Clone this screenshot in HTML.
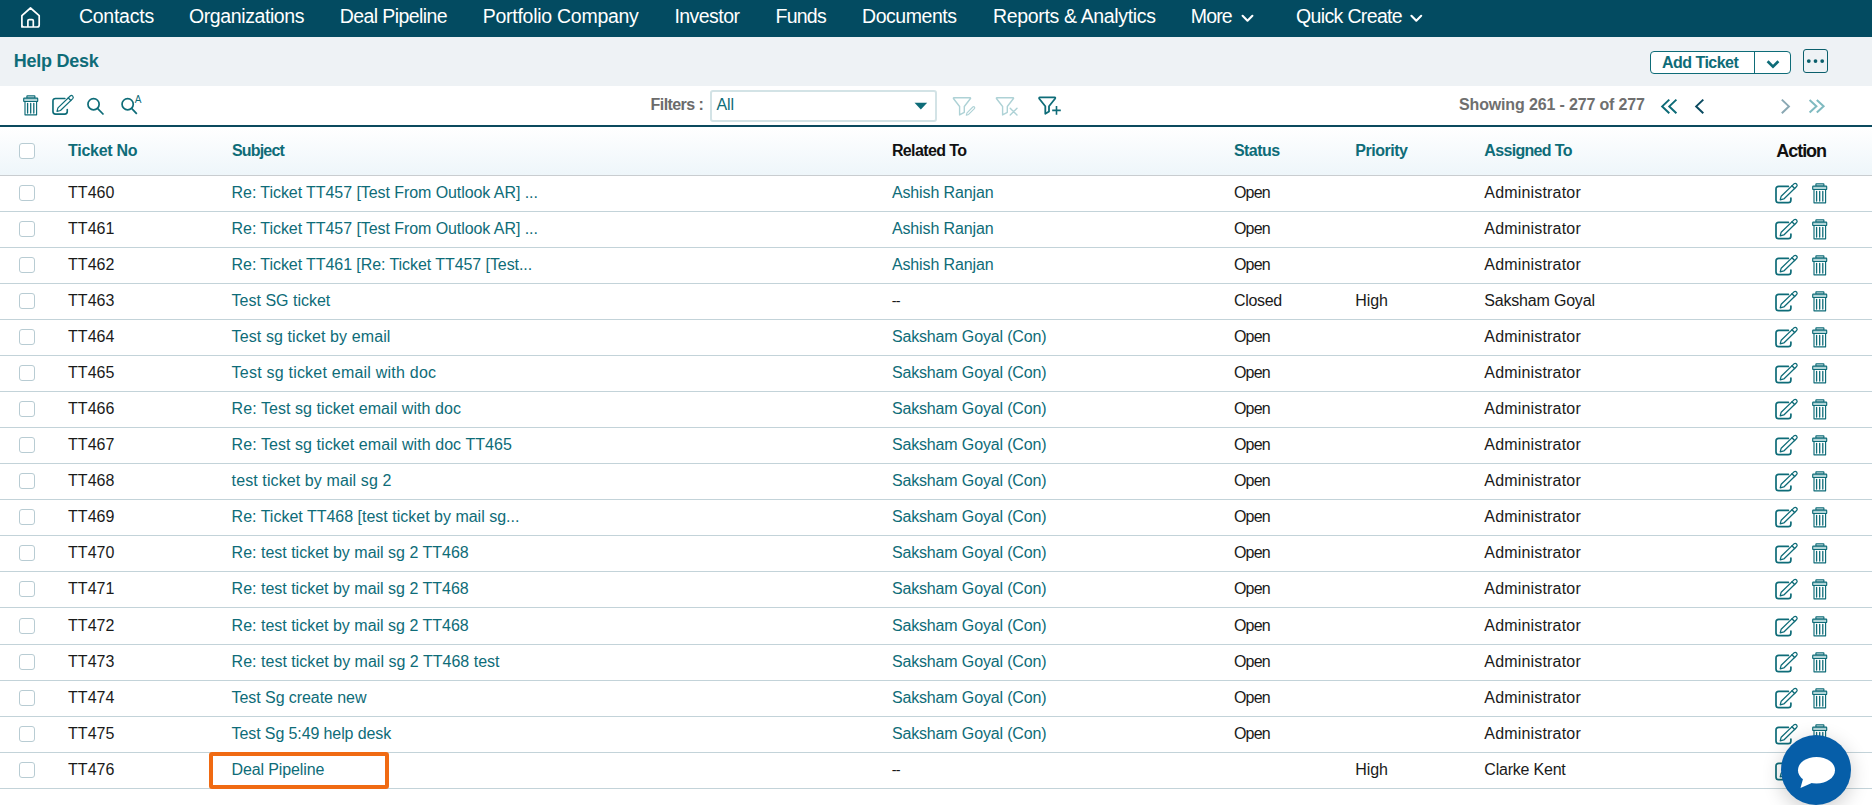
<!DOCTYPE html>
<html><head><meta charset="utf-8"><title>Help Desk</title>
<style>
html,body{margin:0;padding:0;}
body{width:1872px;height:805px;overflow:hidden;position:relative;background:#fff;font-family:"Liberation Sans",sans-serif;}
.t{position:absolute;white-space:nowrap;}
.nav{position:absolute;left:0;top:0;width:1872px;height:37px;background:#034b61;}
.sub{position:absolute;left:0;top:37px;width:1872px;height:49px;background:#eef2f5;}
.dl{position:absolute;left:0;top:125px;width:1872px;height:2px;background:#0b4a5e;}
.hd{position:absolute;left:0;top:127px;width:1872px;height:48px;background:linear-gradient(#ffffff,#eef6fa);}
.hl{position:absolute;left:0;top:175px;width:1872px;height:1px;background:#c9cdd0;}
.rl{position:absolute;left:0;width:1872px;height:1px;background:#c3d3d9;}
.cb{position:absolute;left:19px;width:14px;height:14px;border:1px solid #b8ccd3;border-radius:3px;background:#fff;}
.sel{position:absolute;left:710px;top:90px;width:223px;height:28px;border:2px solid #d3e3e6;border-radius:3px;background:#fff;}
.btn{position:absolute;left:1650px;top:51px;width:139px;height:21px;border:1px solid #0e6c78;border-radius:4px;background:#fff;}
.dots{position:absolute;left:1803px;top:49px;width:23px;height:22px;border:1.3px solid #0b5f6c;border-radius:3px;}
.hi{position:absolute;left:209px;top:752px;width:172px;height:29px;border:4px solid #f06a12;border-radius:3px;}
.chat{position:absolute;left:1781px;top:735px;width:70px;height:70px;border-radius:50%;background:#065ea8;box-shadow:0 5px 20px rgba(0,0,0,0.2);}

.bdv{position:absolute;left:1754px;top:51px;width:1px;height:23px;background:#0e6c78;}
svg.ov{position:absolute;left:0;top:0;}
</style></head><body>
<div class="nav"></div>
<div class="sub"></div>
<div class="dl"></div>
<div class="hd"></div>
<div class="hl"></div>
<div class="sel"></div>
<div class="btn"></div>
<div class="dots"></div>
<div class="cb" style="top:143px"></div>
<div class="bdv"></div>
<div class="t" style="left:78.90px;top:7.29px;font-size:19.5px;line-height:19.5px;color:#ffffff;letter-spacing:-0.243px;">Contacts</div>
<div class="t" style="left:189.00px;top:7.29px;font-size:19.5px;line-height:19.5px;color:#ffffff;letter-spacing:-0.400px;">Organizations</div>
<div class="t" style="left:339.77px;top:7.29px;font-size:19.5px;line-height:19.5px;color:#ffffff;letter-spacing:-0.592px;">Deal Pipeline</div>
<div class="t" style="left:482.77px;top:7.29px;font-size:19.5px;line-height:19.5px;color:#ffffff;letter-spacing:-0.269px;">Portfolio Company</div>
<div class="t" style="left:674.38px;top:7.29px;font-size:19.5px;line-height:19.5px;color:#ffffff;letter-spacing:-0.529px;">Investor</div>
<div class="t" style="left:775.57px;top:7.29px;font-size:19.5px;line-height:19.5px;color:#ffffff;letter-spacing:-0.775px;">Funds</div>
<div class="t" style="left:862.04px;top:7.29px;font-size:19.5px;line-height:19.5px;color:#ffffff;letter-spacing:-0.450px;">Documents</div>
<div class="t" style="left:993.04px;top:7.29px;font-size:19.5px;line-height:19.5px;color:#ffffff;letter-spacing:-0.339px;">Reports &amp; Analytics</div>
<div class="t" style="left:1190.77px;top:7.29px;font-size:19.5px;line-height:19.5px;color:#ffffff;letter-spacing:-0.833px;">More</div>
<div class="t" style="left:1296.00px;top:7.29px;font-size:19.5px;line-height:19.5px;color:#ffffff;letter-spacing:-0.645px;">Quick Create</div>
<div class="t" style="left:13.81px;top:52.06px;font-size:18px;line-height:18px;color:#0e6c78;font-weight:bold;letter-spacing:-0.250px;">Help Desk</div>
<div class="t" style="left:650.60px;top:97.46px;font-size:16px;line-height:16px;color:#6b6b6b;font-weight:bold;letter-spacing:-0.575px;">Filters :</div>
<div class="t" style="left:716.40px;top:97.46px;font-size:16px;line-height:16px;color:#0e6c78;">All</div>
<div class="t" style="left:1662.00px;top:55.46px;font-size:16px;line-height:16px;color:#0e6c78;font-weight:bold;letter-spacing:-0.522px;">Add Ticket</div>
<div class="t" style="left:1459.00px;top:97.46px;font-size:16px;line-height:16px;color:#6f6f6f;font-weight:bold;letter-spacing:-0.152px;">Showing 261 - 277 of 277</div>
<div class="t" style="left:68.10px;top:143.46px;font-size:16px;line-height:16px;color:#0e6c78;font-weight:bold;letter-spacing:-0.287px;">Ticket No</div>
<div class="t" style="left:231.90px;top:143.46px;font-size:16px;line-height:16px;color:#0e6c78;font-weight:bold;letter-spacing:-0.800px;">Subject</div>
<div class="t" style="left:891.90px;top:143.46px;font-size:16px;line-height:16px;color:#111111;font-weight:bold;letter-spacing:-0.611px;">Related To</div>
<div class="t" style="left:1233.90px;top:143.46px;font-size:16px;line-height:16px;color:#0e6c78;font-weight:bold;letter-spacing:-0.520px;">Status</div>
<div class="t" style="left:1355.30px;top:143.46px;font-size:16px;line-height:16px;color:#0e6c78;font-weight:bold;letter-spacing:-0.471px;">Priority</div>
<div class="t" style="left:1484.30px;top:143.46px;font-size:16px;line-height:16px;color:#0e6c78;font-weight:bold;letter-spacing:-0.670px;">Assigned To</div>
<div class="t" style="left:1776.20px;top:142.06px;font-size:18px;line-height:18px;color:#111111;font-weight:bold;letter-spacing:-1.020px;">Action</div>
<div class="t" style="left:68.10px;top:185.46px;font-size:16px;line-height:16px;color:#1a1a1a;">TT460</div>
<div class="t" style="left:231.60px;top:185.46px;font-size:16px;line-height:16px;color:#0e6c78;letter-spacing:-0.069px;">Re: Ticket TT457 [Test From Outlook AR] ...</div>
<div class="t" style="left:891.90px;top:185.46px;font-size:16px;line-height:16px;color:#0e6c78;letter-spacing:-0.125px;">Ashish Ranjan</div>
<div class="t" style="left:1233.90px;top:185.46px;font-size:16px;line-height:16px;color:#1a1a1a;letter-spacing:-0.767px;">Open</div>
<div class="t" style="left:1484.30px;top:185.46px;font-size:16px;line-height:16px;color:#1a1a1a;letter-spacing:0.183px;">Administrator</div>
<div class="rl" style="top:211px"></div>
<div class="cb" style="top:185px"></div>
<div class="t" style="left:68.10px;top:221.46px;font-size:16px;line-height:16px;color:#1a1a1a;">TT461</div>
<div class="t" style="left:231.60px;top:221.46px;font-size:16px;line-height:16px;color:#0e6c78;letter-spacing:-0.069px;">Re: Ticket TT457 [Test From Outlook AR] ...</div>
<div class="t" style="left:891.90px;top:221.46px;font-size:16px;line-height:16px;color:#0e6c78;letter-spacing:-0.125px;">Ashish Ranjan</div>
<div class="t" style="left:1233.90px;top:221.46px;font-size:16px;line-height:16px;color:#1a1a1a;letter-spacing:-0.767px;">Open</div>
<div class="t" style="left:1484.30px;top:221.46px;font-size:16px;line-height:16px;color:#1a1a1a;letter-spacing:0.183px;">Administrator</div>
<div class="rl" style="top:247px"></div>
<div class="cb" style="top:221px"></div>
<div class="t" style="left:68.10px;top:257.46px;font-size:16px;line-height:16px;color:#1a1a1a;">TT462</div>
<div class="t" style="left:231.60px;top:257.46px;font-size:16px;line-height:16px;color:#0e6c78;letter-spacing:-0.071px;">Re: Ticket TT461 [Re: Ticket TT457 [Test...</div>
<div class="t" style="left:891.90px;top:257.46px;font-size:16px;line-height:16px;color:#0e6c78;letter-spacing:-0.125px;">Ashish Ranjan</div>
<div class="t" style="left:1233.90px;top:257.46px;font-size:16px;line-height:16px;color:#1a1a1a;letter-spacing:-0.767px;">Open</div>
<div class="t" style="left:1484.30px;top:257.46px;font-size:16px;line-height:16px;color:#1a1a1a;letter-spacing:0.183px;">Administrator</div>
<div class="rl" style="top:283px"></div>
<div class="cb" style="top:257px"></div>
<div class="t" style="left:68.10px;top:293.46px;font-size:16px;line-height:16px;color:#1a1a1a;">TT463</div>
<div class="t" style="left:231.60px;top:293.46px;font-size:16px;line-height:16px;color:#0e6c78;">Test SG ticket</div>
<div class="t" style="left:891.80px;top:294.03px;font-size:14.5px;line-height:14.5px;color:#1a1a1a;letter-spacing:-0.800px;">--</div>
<div class="t" style="left:1233.90px;top:293.46px;font-size:16px;line-height:16px;color:#1a1a1a;letter-spacing:-0.300px;">Closed</div>
<div class="t" style="left:1355.30px;top:293.46px;font-size:16px;line-height:16px;color:#1a1a1a;letter-spacing:-0.100px;">High</div>
<div class="t" style="left:1484.30px;top:293.46px;font-size:16px;line-height:16px;color:#1a1a1a;letter-spacing:-0.192px;">Saksham Goyal</div>
<div class="rl" style="top:319px"></div>
<div class="cb" style="top:293px"></div>
<div class="t" style="left:68.10px;top:329.46px;font-size:16px;line-height:16px;color:#1a1a1a;">TT464</div>
<div class="t" style="left:231.60px;top:329.46px;font-size:16px;line-height:16px;color:#0e6c78;letter-spacing:0.105px;">Test sg ticket by email</div>
<div class="t" style="left:891.90px;top:329.46px;font-size:16px;line-height:16px;color:#0e6c78;letter-spacing:-0.150px;">Saksham Goyal (Con)</div>
<div class="t" style="left:1233.90px;top:329.46px;font-size:16px;line-height:16px;color:#1a1a1a;letter-spacing:-0.767px;">Open</div>
<div class="t" style="left:1484.30px;top:329.46px;font-size:16px;line-height:16px;color:#1a1a1a;letter-spacing:0.183px;">Administrator</div>
<div class="rl" style="top:355px"></div>
<div class="cb" style="top:329px"></div>
<div class="t" style="left:68.10px;top:365.46px;font-size:16px;line-height:16px;color:#1a1a1a;">TT465</div>
<div class="t" style="left:231.60px;top:365.46px;font-size:16px;line-height:16px;color:#0e6c78;letter-spacing:0.218px;">Test sg ticket email with doc</div>
<div class="t" style="left:891.90px;top:365.46px;font-size:16px;line-height:16px;color:#0e6c78;letter-spacing:-0.150px;">Saksham Goyal (Con)</div>
<div class="t" style="left:1233.90px;top:365.46px;font-size:16px;line-height:16px;color:#1a1a1a;letter-spacing:-0.767px;">Open</div>
<div class="t" style="left:1484.30px;top:365.46px;font-size:16px;line-height:16px;color:#1a1a1a;letter-spacing:0.183px;">Administrator</div>
<div class="rl" style="top:391px"></div>
<div class="cb" style="top:365px"></div>
<div class="t" style="left:68.10px;top:401.46px;font-size:16px;line-height:16px;color:#1a1a1a;">TT466</div>
<div class="t" style="left:231.60px;top:401.46px;font-size:16px;line-height:16px;color:#0e6c78;letter-spacing:0.062px;">Re: Test sg ticket email with doc</div>
<div class="t" style="left:891.90px;top:401.46px;font-size:16px;line-height:16px;color:#0e6c78;letter-spacing:-0.150px;">Saksham Goyal (Con)</div>
<div class="t" style="left:1233.90px;top:401.46px;font-size:16px;line-height:16px;color:#1a1a1a;letter-spacing:-0.767px;">Open</div>
<div class="t" style="left:1484.30px;top:401.46px;font-size:16px;line-height:16px;color:#1a1a1a;letter-spacing:0.183px;">Administrator</div>
<div class="rl" style="top:427px"></div>
<div class="cb" style="top:401px"></div>
<div class="t" style="left:68.10px;top:437.46px;font-size:16px;line-height:16px;color:#1a1a1a;">TT467</div>
<div class="t" style="left:231.60px;top:437.46px;font-size:16px;line-height:16px;color:#0e6c78;letter-spacing:0.068px;">Re: Test sg ticket email with doc TT465</div>
<div class="t" style="left:891.90px;top:437.46px;font-size:16px;line-height:16px;color:#0e6c78;letter-spacing:-0.150px;">Saksham Goyal (Con)</div>
<div class="t" style="left:1233.90px;top:437.46px;font-size:16px;line-height:16px;color:#1a1a1a;letter-spacing:-0.767px;">Open</div>
<div class="t" style="left:1484.30px;top:437.46px;font-size:16px;line-height:16px;color:#1a1a1a;letter-spacing:0.183px;">Administrator</div>
<div class="rl" style="top:463px"></div>
<div class="cb" style="top:437px"></div>
<div class="t" style="left:68.10px;top:473.46px;font-size:16px;line-height:16px;color:#1a1a1a;">TT468</div>
<div class="t" style="left:231.60px;top:473.46px;font-size:16px;line-height:16px;color:#0e6c78;letter-spacing:0.104px;">test ticket by mail sg 2</div>
<div class="t" style="left:891.90px;top:473.46px;font-size:16px;line-height:16px;color:#0e6c78;letter-spacing:-0.150px;">Saksham Goyal (Con)</div>
<div class="t" style="left:1233.90px;top:473.46px;font-size:16px;line-height:16px;color:#1a1a1a;letter-spacing:-0.767px;">Open</div>
<div class="t" style="left:1484.30px;top:473.46px;font-size:16px;line-height:16px;color:#1a1a1a;letter-spacing:0.183px;">Administrator</div>
<div class="rl" style="top:499px"></div>
<div class="cb" style="top:473px"></div>
<div class="t" style="left:68.10px;top:509.46px;font-size:16px;line-height:16px;color:#1a1a1a;">TT469</div>
<div class="t" style="left:231.60px;top:509.46px;font-size:16px;line-height:16px;color:#0e6c78;">Re: Ticket TT468 [test ticket by mail sg...</div>
<div class="t" style="left:891.90px;top:509.46px;font-size:16px;line-height:16px;color:#0e6c78;letter-spacing:-0.150px;">Saksham Goyal (Con)</div>
<div class="t" style="left:1233.90px;top:509.46px;font-size:16px;line-height:16px;color:#1a1a1a;letter-spacing:-0.767px;">Open</div>
<div class="t" style="left:1484.30px;top:509.46px;font-size:16px;line-height:16px;color:#1a1a1a;letter-spacing:0.183px;">Administrator</div>
<div class="rl" style="top:535px"></div>
<div class="cb" style="top:509px"></div>
<div class="t" style="left:68.10px;top:545.46px;font-size:16px;line-height:16px;color:#1a1a1a;">TT470</div>
<div class="t" style="left:231.60px;top:545.46px;font-size:16px;line-height:16px;color:#0e6c78;">Re: test ticket by mail sg 2 TT468</div>
<div class="t" style="left:891.90px;top:545.46px;font-size:16px;line-height:16px;color:#0e6c78;letter-spacing:-0.150px;">Saksham Goyal (Con)</div>
<div class="t" style="left:1233.90px;top:545.46px;font-size:16px;line-height:16px;color:#1a1a1a;letter-spacing:-0.767px;">Open</div>
<div class="t" style="left:1484.30px;top:545.46px;font-size:16px;line-height:16px;color:#1a1a1a;letter-spacing:0.183px;">Administrator</div>
<div class="rl" style="top:571px"></div>
<div class="cb" style="top:545px"></div>
<div class="t" style="left:68.10px;top:581.46px;font-size:16px;line-height:16px;color:#1a1a1a;">TT471</div>
<div class="t" style="left:231.60px;top:581.46px;font-size:16px;line-height:16px;color:#0e6c78;">Re: test ticket by mail sg 2 TT468</div>
<div class="t" style="left:891.90px;top:581.46px;font-size:16px;line-height:16px;color:#0e6c78;letter-spacing:-0.150px;">Saksham Goyal (Con)</div>
<div class="t" style="left:1233.90px;top:581.46px;font-size:16px;line-height:16px;color:#1a1a1a;letter-spacing:-0.767px;">Open</div>
<div class="t" style="left:1484.30px;top:581.46px;font-size:16px;line-height:16px;color:#1a1a1a;letter-spacing:0.183px;">Administrator</div>
<div class="rl" style="top:607px"></div>
<div class="cb" style="top:581px"></div>
<div class="t" style="left:68.10px;top:618.46px;font-size:16px;line-height:16px;color:#1a1a1a;">TT472</div>
<div class="t" style="left:231.60px;top:618.46px;font-size:16px;line-height:16px;color:#0e6c78;">Re: test ticket by mail sg 2 TT468</div>
<div class="t" style="left:891.90px;top:618.46px;font-size:16px;line-height:16px;color:#0e6c78;letter-spacing:-0.150px;">Saksham Goyal (Con)</div>
<div class="t" style="left:1233.90px;top:618.46px;font-size:16px;line-height:16px;color:#1a1a1a;letter-spacing:-0.767px;">Open</div>
<div class="t" style="left:1484.30px;top:618.46px;font-size:16px;line-height:16px;color:#1a1a1a;letter-spacing:0.183px;">Administrator</div>
<div class="rl" style="top:644px"></div>
<div class="cb" style="top:618px"></div>
<div class="t" style="left:68.10px;top:654.46px;font-size:16px;line-height:16px;color:#1a1a1a;">TT473</div>
<div class="t" style="left:231.60px;top:654.46px;font-size:16px;line-height:16px;color:#0e6c78;letter-spacing:0.016px;">Re: test ticket by mail sg 2 TT468 test</div>
<div class="t" style="left:891.90px;top:654.46px;font-size:16px;line-height:16px;color:#0e6c78;letter-spacing:-0.150px;">Saksham Goyal (Con)</div>
<div class="t" style="left:1233.90px;top:654.46px;font-size:16px;line-height:16px;color:#1a1a1a;letter-spacing:-0.767px;">Open</div>
<div class="t" style="left:1484.30px;top:654.46px;font-size:16px;line-height:16px;color:#1a1a1a;letter-spacing:0.183px;">Administrator</div>
<div class="rl" style="top:680px"></div>
<div class="cb" style="top:654px"></div>
<div class="t" style="left:68.10px;top:690.46px;font-size:16px;line-height:16px;color:#1a1a1a;">TT474</div>
<div class="t" style="left:231.60px;top:690.46px;font-size:16px;line-height:16px;color:#0e6c78;letter-spacing:-0.071px;">Test Sg create new</div>
<div class="t" style="left:891.90px;top:690.46px;font-size:16px;line-height:16px;color:#0e6c78;letter-spacing:-0.150px;">Saksham Goyal (Con)</div>
<div class="t" style="left:1233.90px;top:690.46px;font-size:16px;line-height:16px;color:#1a1a1a;letter-spacing:-0.767px;">Open</div>
<div class="t" style="left:1484.30px;top:690.46px;font-size:16px;line-height:16px;color:#1a1a1a;letter-spacing:0.183px;">Administrator</div>
<div class="rl" style="top:716px"></div>
<div class="cb" style="top:690px"></div>
<div class="t" style="left:68.10px;top:726.46px;font-size:16px;line-height:16px;color:#1a1a1a;">TT475</div>
<div class="t" style="left:231.60px;top:726.46px;font-size:16px;line-height:16px;color:#0e6c78;letter-spacing:-0.110px;">Test Sg 5:49 help desk</div>
<div class="t" style="left:891.90px;top:726.46px;font-size:16px;line-height:16px;color:#0e6c78;letter-spacing:-0.150px;">Saksham Goyal (Con)</div>
<div class="t" style="left:1233.90px;top:726.46px;font-size:16px;line-height:16px;color:#1a1a1a;letter-spacing:-0.767px;">Open</div>
<div class="t" style="left:1484.30px;top:726.46px;font-size:16px;line-height:16px;color:#1a1a1a;letter-spacing:0.183px;">Administrator</div>
<div class="rl" style="top:752px"></div>
<div class="cb" style="top:726px"></div>
<div class="t" style="left:68.10px;top:762.46px;font-size:16px;line-height:16px;color:#1a1a1a;">TT476</div>
<div class="t" style="left:231.60px;top:762.46px;font-size:16px;line-height:16px;color:#0e6c78;letter-spacing:-0.125px;">Deal Pipeline</div>
<div class="t" style="left:891.80px;top:763.03px;font-size:14.5px;line-height:14.5px;color:#1a1a1a;letter-spacing:-0.800px;">--</div>
<div class="t" style="left:1355.30px;top:762.46px;font-size:16px;line-height:16px;color:#1a1a1a;letter-spacing:-0.100px;">High</div>
<div class="t" style="left:1484.30px;top:762.46px;font-size:16px;line-height:16px;color:#1a1a1a;letter-spacing:-0.210px;">Clarke Kent</div>
<div class="rl" style="top:788px"></div>
<div class="cb" style="top:762px"></div>
<div class="t" style="left:134.8px;top:95px;font-size:10px;line-height:10px;color:#0e6c78;">A</div>
<div class="hi"></div>
<svg class="ov" width="1872" height="805" viewBox="0 0 1872 805">
<defs>
<g id="ed" fill="none" stroke="#0e6c78" stroke-linecap="round" stroke-linejoin="round">
<path d="M13.4 3.4 H3.7 Q1 3.4 1 6.1 V17 Q1 19.7 3.7 19.7 H13.2 Q15.9 19.7 15.9 17 V15" stroke-width="1.7"/>
<path d="M5.2 16.8 L6.18 13.21 L18.98 0.84 A1.9 1.9 0 0 1 21.62 3.56 L8.82 15.93 Z" stroke-width="1.25"/>
<path d="M16.97 2.79 L19.61 5.51" stroke-width="1.4"/>
</g>
<g id="tr" fill="none" stroke="#0e6c78" stroke-width="1.15" stroke-linejoin="round">
<rect x="3.9" y="0.9" width="8" height="2.2" rx="0.4"/>
<rect x="0.7" y="3.1" width="14" height="3.4" rx="0.6" fill="#b3d5d8"/>
<path d="M2 6.5 V19.8 H13.6 V6.5"/>
<path d="M4.6 8.3 V18 M7.7 8.3 V18 M10.8 8.3 V18" stroke-width="1.3" stroke-linecap="round"/>
</g>
</defs>
<path d="M21.9 27 V15.6 L30.5 8 L39.2 15.6 V25 Q39.2 27 37.2 27 H23.9 Q21.9 27 21.9 25 Z M27.9 27 V20.8 Q27.9 19.6 29.1 19.6 H32.1 Q33.3 19.6 33.3 20.8 V27" fill="none" stroke="#fff" stroke-width="1.7" stroke-linejoin="round"/>
<use href="#tr" transform="translate(23,95)"/>
<use href="#ed" transform="translate(52,95.2) scale(0.96)"/>
<g fill="none" stroke="#0e6c78" stroke-width="1.7">
<circle cx="93.55" cy="104.2" r="5.6"/><path d="M97.5 108.3 L103.5 114.5"/>
<circle cx="127.66" cy="104.2" r="5.6"/><path d="M131.6 108.3 L136.8 113.9"/>
</g>
<g fill="none" stroke="#aed2d6" stroke-width="1.4" stroke-linejoin="round" stroke-linecap="round">
<path d="M954 97.7 H970 Q971 97.9 970.3 98.8 L964.3 106.5 V112.3 L959.6 114.9 V106.5 L953.6 98.8 Q953 97.9 954 97.7 Z"/>
<path d="M966.3 115.2 L967 112.8 L972.8 107 A1.1 1.1 0 0 1 974.4 108.6 L968.6 114.4 Z" stroke-width="1.1"/>
<path d="M997 97.7 H1013 Q1014 97.9 1013.3 98.8 L1007.3 106.5 V112.3 L1002.6 114.9 V106.5 L996.6 98.8 Q996 97.9 997 97.7 Z"/>
<path d="M1010.2 108.2 L1017 115 M1017 108.2 L1010.2 115"/>
</g>
<g fill="none" stroke="#0e6c78" stroke-width="1.8" stroke-linejoin="round">
<path d="M1040 97.4 H1054.6 Q1055.8 97.6 1055 98.7 L1049 106.2 V111.4 L1045.3 113.8 V106.2 L1039.3 98.7 Q1038.6 97.6 1040 97.4 Z"/>
<path d="M1056.5 106.1 V114.7 M1052.2 110.4 H1060.8" stroke-width="1.6"/>
</g>
<path d="M914.5 102.8 H927.2 L920.85 109.4 Z" fill="#0e6c78"/>
<g fill="none" stroke="#fff" stroke-width="2.1" stroke-linecap="round" stroke-linejoin="round">
<path d="M1242.6 15.8 L1247.5 20.7 L1252.4 15.8"/>
<path d="M1411.4 15.8 L1416.3 20.7 L1421.2 15.8"/>
</g>
<path d="M1767.6 61.2 L1773 66.6 L1778.4 61.2" fill="none" stroke="#0e6c78" stroke-width="2.7"/>
<g fill="#0b5f6c"><circle cx="1808.8" cy="61.1" r="1.9"/><circle cx="1815.5" cy="61.1" r="1.9"/><circle cx="1822.2" cy="61.1" r="1.9"/></g>
<g fill="none" stroke-width="2">
<path d="M1669.3 99.6 L1662.2 106.4 L1669.3 113.2 M1676.4 99.6 L1669.3 106.4 L1676.4 113.2" stroke="#0d6b77"/>
<path d="M1703.3 99.6 L1696.2 106.4 L1703.3 113.2" stroke="#0a4a60"/>
<path d="M1781.8 99.6 L1788.9 106.4 L1781.8 113.2" stroke="#8aa8b3"/>
<path d="M1809.6 100 L1816.4 106.2 L1809.6 112.4 M1816.8 100 L1823.6 106.2 L1816.8 112.4" stroke="#7fbac0"/>
</g>
<use href="#ed" transform="translate(1775,183)"/><use href="#tr" transform="translate(1812,183)"/>
<use href="#ed" transform="translate(1775,219)"/><use href="#tr" transform="translate(1812,219)"/>
<use href="#ed" transform="translate(1775,255)"/><use href="#tr" transform="translate(1812,255)"/>
<use href="#ed" transform="translate(1775,291)"/><use href="#tr" transform="translate(1812,291)"/>
<use href="#ed" transform="translate(1775,327)"/><use href="#tr" transform="translate(1812,327)"/>
<use href="#ed" transform="translate(1775,363)"/><use href="#tr" transform="translate(1812,363)"/>
<use href="#ed" transform="translate(1775,399)"/><use href="#tr" transform="translate(1812,399)"/>
<use href="#ed" transform="translate(1775,435)"/><use href="#tr" transform="translate(1812,435)"/>
<use href="#ed" transform="translate(1775,471)"/><use href="#tr" transform="translate(1812,471)"/>
<use href="#ed" transform="translate(1775,507)"/><use href="#tr" transform="translate(1812,507)"/>
<use href="#ed" transform="translate(1775,543)"/><use href="#tr" transform="translate(1812,543)"/>
<use href="#ed" transform="translate(1775,579)"/><use href="#tr" transform="translate(1812,579)"/>
<use href="#ed" transform="translate(1775,616)"/><use href="#tr" transform="translate(1812,616)"/>
<use href="#ed" transform="translate(1775,652)"/><use href="#tr" transform="translate(1812,652)"/>
<use href="#ed" transform="translate(1775,688)"/><use href="#tr" transform="translate(1812,688)"/>
<use href="#ed" transform="translate(1775,724)"/><use href="#tr" transform="translate(1812,724)"/>
<use href="#ed" transform="translate(1775,760)"/><use href="#tr" transform="translate(1812,760)"/>
</svg>
<div class="chat"></div>
<svg class="ov" width="1872" height="805" viewBox="0 0 1872 805" style="pointer-events:none">
<ellipse cx="1816.5" cy="770.2" rx="18.5" ry="13.2" fill="#fff"/>
<path d="M1803.5 777 L1800.5 788 L1814 782 Z" fill="#fff"/>
</svg>
</body></html>
